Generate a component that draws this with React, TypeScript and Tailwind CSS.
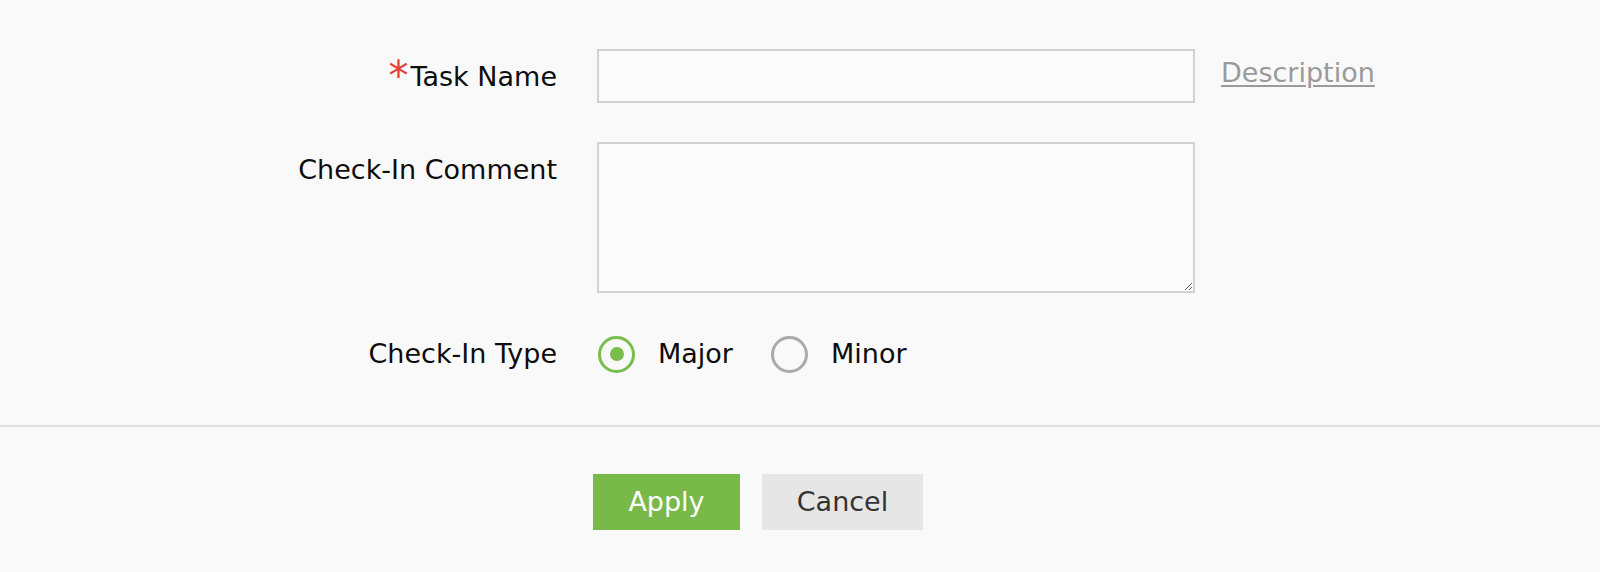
import { useState } from 'react';

export default function App() {
  const [type, setType] = useState<'major' | 'minor'>('major');

  return (
    <div className="min-h-[572px] w-full bg-[#f9f9f9] font-['DejaVu_Sans',Verdana,sans-serif] text-[27px] text-[#0d0d0d]">
      {/* Form fields */}
      <div className="pt-[49px]">
        {/* Task Name */}
        <div className="flex items-start">
          <label className="w-[557px] shrink-0 text-right leading-[56px]">
            <span className="mr-[2px] align-[-4px] text-[40px] leading-[0px] text-[#e5413a]">*</span>Task Name
          </label>
          <input
            type="text"
            className="ml-[40px] block h-[54px] w-[598px] border-2 border-[#d2d2d2] bg-[#fbfbfb] px-3 outline-none"
          />
          <a href="#" className="ml-[26px] leading-[48px] text-[#9a9a9a] underline decoration-2 underline-offset-[3px]">
            Description
          </a>
        </div>

        {/* Check-In Comment */}
        <div className="mt-[37px] flex items-start">
          <label className="w-[557px] shrink-0 text-right leading-[56px]">Check-In Comment</label>
          <textarea className="ml-[40px] block h-[151px] w-[598px] border-2 border-[#d2d2d2] bg-[#fbfbfb] px-3 py-2 outline-none" />
        </div>

        {/* Check-In Type */}
        <div className="mt-[34px] flex h-[54px] items-center">
          <label className="w-[557px] shrink-0 text-right">Check-In Type</label>
          <div className="ml-[41px] flex items-center">
            <button type="button" onClick={() => setType('major')} className="flex items-center">
              <span
                className={
                  type === 'major'
                    ? 'flex h-[37px] w-[37px] items-center justify-center rounded-full border-[3px] border-[#79bd4c]'
                    : 'flex h-[37px] w-[37px] items-center justify-center rounded-full border-[3px] border-[#aaaaaa]'
                }
              >
                {type === 'major' && <span className="h-[14px] w-[14px] rounded-full bg-[#79bd4c]" />}
              </span>
              <span className="ml-[23px]">Major</span>
            </button>
            <button type="button" onClick={() => setType('minor')} className="ml-[38px] flex items-center">
              <span
                className={
                  type === 'minor'
                    ? 'flex h-[37px] w-[37px] items-center justify-center rounded-full border-[3px] border-[#79bd4c]'
                    : 'flex h-[37px] w-[37px] items-center justify-center rounded-full border-[3px] border-[#aaaaaa]'
                }
              >
                {type === 'minor' && <span className="h-[14px] w-[14px] rounded-full bg-[#79bd4c]" />}
              </span>
              <span className="ml-[23px]">Minor</span>
            </button>
          </div>
        </div>
      </div>

      {/* Divider */}
      <div className="mt-[44px] h-[2px] w-full bg-[#dedede]" />

      {/* Actions */}
      <div className="ml-[593px] mt-[47px] flex gap-[22px] pb-[43px]">
        <button type="button" className="h-[56px] w-[147px] bg-[#79b94a] text-white">
          Apply
        </button>
        <button type="button" className="h-[56px] w-[161px] bg-[#e6e6e6] text-[#333]">
          Cancel
        </button>
      </div>
    </div>
  );
}
